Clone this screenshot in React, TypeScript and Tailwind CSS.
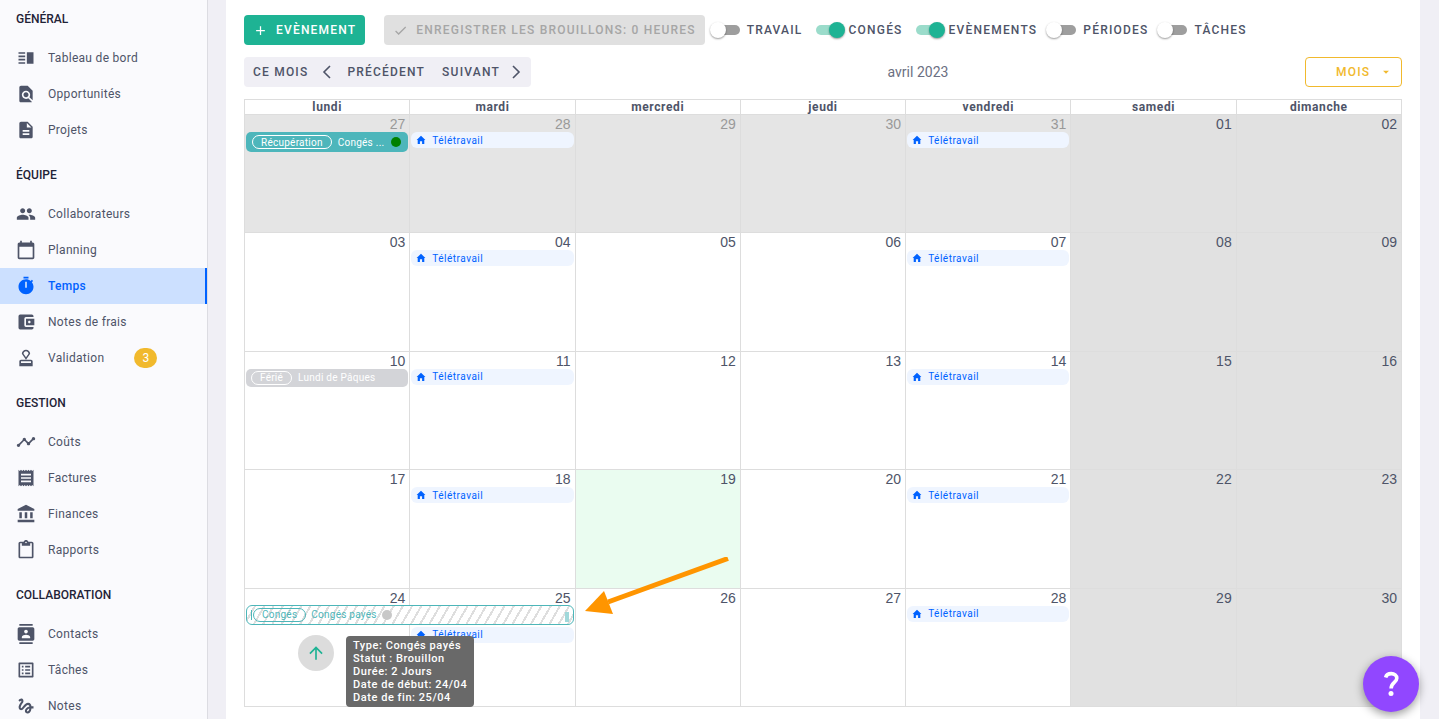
import { useState } from 'react';
import type { ReactNode } from 'react';
import type { IconType } from 'react-icons';
import {
    MdAccountBalance,
    MdAccountBalanceWallet,
    MdAdd,
    MdArrowDropDown,
    MdArrowUpward,
    MdCalendarToday,
    MdCheck,
    MdContacts,
    MdContentPaste,
    MdDescription,
    MdFindInPage,
    MdGesture,
    MdOutlineApproval,
    MdOutlineListAlt,
    MdPeople,
    MdReceipt,
    MdTimeline,
    MdVerticalSplit,
} from 'react-icons/md';

function TimerIcon({ size = 20 }: { size?: number | string }) {
    return (
        <svg width={size} height={size} viewBox="0 0 24 24" fill="currentColor">
            <path d="M19.03 7.39L20.45 5.97C20 5.46 19.55 5 19.04 4.56L17.62 6C16.07 4.74 14.12 4 12 4C7.03 4 3 8.03 3 13S7.03 22 12 22C17 22 21 17.97 21 13C21 10.88 20.26 8.93 19.03 7.39M13 14H11V7H13V14M15 1H9V3H15V1Z" />
        </svg>
    );
}

function HomeIcon() {
    return (
        <svg width="10" height="10" viewBox="0 0 10 10" fill="currentColor">
            <path d="M5 0.8 9.4 5H8.3V9H6.1V6.3H3.9V9H1.7V5H0.6Z" />
        </svg>
    );
}

function HelpIcon() {
    return (
        <svg width="28" height="28" viewBox="0 0 28 28" fill="none">
            <path d="M8.6 7.4C9.4 4.6 11.6 3.6 14.2 3.6C17.4 3.6 19.8 5.4 19.8 8.2C19.8 12.4 14.1 12.6 14.1 18.4" stroke="currentColor" strokeWidth="3.6" />
            <circle cx="14" cy="23.6" r="2.5" fill="currentColor" />
        </svg>
    );
}

function Chevron({ points }: { points: string }) {
    return (
        <svg width="10" height="14" viewBox="0 0 10 14" fill="none" stroke="currentColor" strokeWidth="1.6">
            <polyline points={points} />
        </svg>
    );
}

type MenuItem = { label: string; icon: IconType; badge?: number };

const MENU: { title: string; items: MenuItem[] }[] = [
    {
        title: 'GÉNÉRAL',
        items: [
            { label: 'Tableau de bord', icon: MdVerticalSplit },
            { label: 'Opportunités', icon: MdFindInPage },
            { label: 'Projets', icon: MdDescription },
        ],
    },
    {
        title: 'ÉQUIPE',
        items: [
            { label: 'Collaborateurs', icon: MdPeople },
            { label: 'Planning', icon: MdCalendarToday },
            { label: 'Temps', icon: TimerIcon },
            { label: 'Notes de frais', icon: MdAccountBalanceWallet },
            { label: 'Validation', icon: MdOutlineApproval, badge: 3 },
        ],
    },
    {
        title: 'GESTION',
        items: [
            { label: 'Coûts', icon: MdTimeline },
            { label: 'Factures', icon: MdReceipt },
            { label: 'Finances', icon: MdAccountBalance },
            { label: 'Rapports', icon: MdContentPaste },
        ],
    },
    {
        title: 'COLLABORATION',
        items: [
            { label: 'Contacts', icon: MdContacts },
            { label: 'Tâches', icon: MdOutlineListAlt },
            { label: 'Notes', icon: MdGesture },
        ],
    },
];

const DAYS = ['lundi', 'mardi', 'mercredi', 'jeudi', 'vendredi', 'samedi', 'dimanche'];

const WEEKS = [
    ['27', '28', '29', '30', '31', '01', '02'],
    ['03', '04', '05', '06', '07', '08', '09'],
    ['10', '11', '12', '13', '14', '15', '16'],
    ['17', '18', '19', '20', '21', '22', '23'],
    ['24', '25', '26', '27', '28', '29', '30'],
];

function Sidebar() {
    return (
        <nav className="h-screen w-[208px] shrink-0 overflow-hidden border-r border-[#dcdce2] bg-[#fafafd]">
            {MENU.map((group) => (
                <section key={group.title} className="pb-2">
                    <h2 className="h-10 pt-[9px] pl-4 text-[12px] leading-5 font-medium text-[#1f2337]">{group.title}</h2>
                    <ul>
                        {group.items.map(({ label, icon: Icon, badge }) => (
                            <li key={label}>
                                <a
                                    href="#"
                                    className={
                                        label === 'Temps'
                                            ? 'flex h-9 items-center border-r-2 border-[#0062ff] bg-[#cce0ff] pl-4 text-[12px] font-medium tracking-wide text-[#0062ff]'
                                            : 'flex h-9 items-center pl-4 text-[12px] tracking-wide text-[#4e5468]'
                                    }
                                >
                                    <Icon size={20} />
                                    <span className="ml-3">{label}</span>
                                    {badge && (
                                        <span className="ml-[30px] flex h-5 w-[23px] items-center justify-center rounded-full bg-[#f1b92d] tracking-normal text-white">
                                            {badge}
                                        </span>
                                    )}
                                </a>
                            </li>
                        ))}
                    </ul>
                </section>
            ))}
        </nav>
    );
}

function Switch({ label, initial = false }: { label: string; initial?: boolean }) {
    const [on, setOn] = useState(initial);

    return (
        <label className="flex items-center text-[12px] font-medium tracking-widest text-[#4e5468]">
            <input
                type="checkbox"
                checked={on}
                onChange={(e) => setOn(e.target.checked)}
                className="relative mr-[7px] ml-1 h-[10px] w-[26px] appearance-none rounded-full bg-[#9e9e9e] before:absolute before:-top-[3px] before:-left-1 before:size-4 before:rounded-full before:bg-white before:shadow-[0_1px_2px_rgba(0,0,0,0.4)] checked:bg-[#9bdccb] checked:before:left-[13px] checked:before:bg-[#1eb394]"
            />
            {label}
        </label>
    );
}

function Remote() {
    return (
        <div className="mr-px ml-px flex h-4 items-center rounded-md bg-[#eff5ff] pl-[5px] text-[10px] tracking-wider text-[#0062ff]">
            <HomeIcon />
            <span className="ml-[6px]">Télétravail</span>
        </div>
    );
}

function Pill({ children }: { children: ReactNode }) {
    return <span className="flex h-[14px] items-center rounded-full border border-current px-2">{children}</span>;
}

function DraftLeave() {
    return (
        <div className="absolute top-4 left-px z-10 flex h-5 w-[calc(200%-1px)] items-center rounded-md border border-[#4db6b9] bg-[repeating-linear-gradient(120deg,#ffffff_0px,#ffffff_6px,#dedede_6px,#dedede_8px)] px-1 text-[10px] tracking-wide text-[#4db6b9]">
            <span className="h-[10px] w-[2px] border-l border-[#4db6b9]" />
            <Pill>Congés</Pill>
            <span className="ml-[5px]">Congés payés</span>
            <span className="ml-[5px] size-[10px] rounded-full bg-[#c8c8c8]" />
            <span className="mt-1 ml-auto h-[10px] w-1 bg-[#a0d8da]" />
        </div>
    );
}

function DraftTooltip() {
    return (
        <>
            <button
                type="button"
                aria-label="Envoyer le brouillon"
                className="absolute top-[46px] left-[53px] z-10 flex size-9 items-center justify-center rounded-full bg-[#dcdcdc] text-[#1eb394]"
            >
                <MdArrowUpward size={20} />
            </button>
            <div
                role="tooltip"
                className="absolute top-[47px] left-[101px] z-20 rounded bg-[#696969] px-[7px] py-[3px] text-[11px] leading-[13px] font-medium tracking-wider whitespace-nowrap text-white"
            >
                <p>Type: Congés payés</p>
                <p>Statut : Brouillon</p>
                <p>Durée: 2 Jours</p>
                <p>Date de début: 24/04</p>
                <p>Date de fin: 25/04</p>
            </div>
        </>
    );
}

function DayEvents({ week, day }: { week: number; day: number }) {
    if (day === 4) return <Remote />;
    if (day === 1) {
        // the two-day leave above pushes this one down a line
        return week === 4 ? <div className="pt-[21px]"><Remote /></div> : <Remote />;
    }
    if (day === 0 && week === 0) {
        return (
            <div className="mx-px flex h-5 items-center rounded-[5px] bg-[#4db6bb] pr-[7px] pl-[6px] text-[10px] tracking-wide text-white">
                <Pill>Récupération</Pill>
                <span className="ml-[6px]">Congés ...</span>
                <span className="ml-auto size-[10px] rounded-full bg-[#008000]" />
            </div>
        );
    }
    if (day === 0 && week === 2) {
        return (
            <div className="mx-px flex h-[18px] items-center rounded-[5px] bg-[#d3d4d8] pl-[5px] text-[10px] tracking-wide text-white">
                <Pill>Férié</Pill>
                <span className="ml-[6px]">Lundi de Pâques</span>
            </div>
        );
    }
    if (day === 0 && week === 4) {
        return (
            <>
                <DraftLeave />
                <DraftTooltip />
            </>
        );
    }
    if (day === 2 && week === 4) {
        return (
            <svg className="absolute -top-8 left-[9px] z-10" width="146" height="62" viewBox="0 0 146 62">
                <path d="M143 1.5 23 45" stroke="#ff9500" strokeWidth="5" />
                <path d="M0 54 19 34 28 57Z" fill="#ff9500" />
            </svg>
        );
    }
    return null;
}

function cellColor(week: number, day: number) {
    if (day > 4) return 'bg-[#e1e1e1] text-[#4e5468]';
    if (week === 0) return 'bg-[#e5e5e5] text-[#999999]';
    if (week === 3 && day === 2) return 'bg-[#eafcf0] text-[#4e5468]';
    return 'bg-white text-[#4e5468]';
}

function Calendar() {
    return (
        <table className="mt-3 w-full flex-1 table-fixed border-collapse border border-[#dddddd]">
            <thead>
                <tr>
                    {DAYS.map((day) => (
                        <th key={day} className="h-[15px] border border-[#dddddd] p-0 text-[12px] leading-[14px] font-bold tracking-wider text-[#4e5468]">
                            {day}
                        </th>
                    ))}
                </tr>
            </thead>
            <tbody>
                {WEEKS.map((days, week) => (
                    <tr key={week}>
                        {days.map((date, day) => (
                            <td key={day} className={`relative h-[118px] border border-[#dddddd] p-0 align-top ${cellColor(week, day)}`}>
                                <div className="h-[17px] pr-1 text-right font-['Liberation_Sans',sans-serif] text-[14px] leading-[18px]">
                                    {date}
                                </div>
                                <DayEvents week={week} day={day} />
                            </td>
                        ))}
                    </tr>
                ))}
            </tbody>
        </table>
    );
}

export default function App() {
    const [view, setView] = useState('MOIS');

    return (
        <div className="flex min-h-screen bg-[#f0eff5] font-['Roboto',sans-serif]">
            <Sidebar />

            <main className="mr-[19px] ml-[18px] flex min-h-screen flex-1 flex-col bg-white px-[18px] pt-[15px] pb-3">
                {/* Actions and filters */}
                <div className="flex items-center">
                    <button
                        type="button"
                        className="flex h-[30px] items-center rounded bg-[#1eb394] px-[9px] text-[12px] font-medium tracking-widest whitespace-nowrap text-white"
                    >
                        <MdAdd size={15} className="mr-2" />
                        EVÈNEMENT
                    </button>
                    <button
                        type="button"
                        disabled
                        className="mr-[5px] ml-[19px] flex h-[30px] items-center rounded bg-[#e0e0e0] px-[9px] text-[12px] font-medium tracking-widest whitespace-nowrap text-[#a6a6a6]"
                    >
                        <MdCheck size={15} className="mr-2" />
                        ENREGISTRER LES BROUILLONS: 0 HEURES
                    </button>
                    <div className="flex items-center gap-[9px]">
                        <Switch label="TRAVAIL" />
                        <Switch label="CONGÉS" initial />
                        <Switch label="EVÈNEMENTS" initial />
                        <Switch label="PÉRIODES" />
                        <Switch label="TÂCHES" />
                    </div>
                </div>

                {/* Month navigation */}
                <div className="mt-3 flex items-center justify-between">
                    <div className="flex h-[30px] items-center rounded bg-[#f0eff5] text-[12px] font-medium text-[#4e5468]">
                        <button type="button" className="pl-[9px] tracking-widest">CE MOIS</button>
                        <button type="button" className="ml-[14px] flex items-center tracking-widest">
                            <Chevron points="8,1 2,7 8,13" />
                            <span className="ml-[15px]">PRÉCÉDENT</span>
                        </button>
                        <button type="button" className="ml-[17px] flex items-center pr-[10px] tracking-widest">
                            <span className="mr-[11px]">SUIVANT</span>
                            <Chevron points="2,1 8,7 2,13" />
                        </button>
                    </div>
                    <h1 className="text-[14px] text-[#6b6f82]">avril 2023</h1>
                    <div className="relative">
                        <select
                            aria-label="Vue"
                            value={view}
                            onChange={(e) => setView(e.target.value)}
                            className="h-[30px] w-[97px] appearance-none rounded border border-[#f1b92d] bg-white pl-[30px] text-[12px] font-medium tracking-widest text-[#f1b92d]"
                        >
                            <option>MOIS</option>
                        </select>
                        <MdArrowDropDown size={14} className="pointer-events-none absolute top-2 right-[9px] text-[#f1b92d]" />
                    </div>
                </div>

                <Calendar />
            </main>

            <button
                type="button"
                aria-label="Aide"
                className="fixed right-5 bottom-[7px] z-30 flex size-14 items-center justify-center rounded-full bg-[#9147ff] text-white shadow-[0_3px_10px_rgba(0,0,0,0.4)]"
            >
                <HelpIcon />
            </button>
        </div>
    );
}
